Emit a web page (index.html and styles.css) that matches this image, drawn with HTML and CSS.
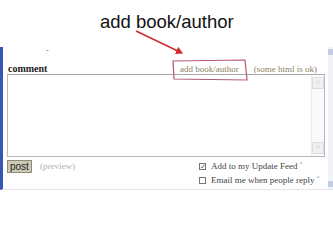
FILE: index.html
```html
<!DOCTYPE html>
<html>
<head>
<meta charset="utf-8">
<link rel="stylesheet" href="styles.css">
</head>
<body>
<div class="stage">
  <h1 class="title">add book/author</h1>
  <div class="shot">
    <div class="page">
      <div class="dash">-</div>
      <div class="head">
        <span class="label">comment</span>
        <span class="links"><span class="link">add book/author</span><span class="note">(some html is ok)</span></span>
      </div>
      <div class="textarea">
        <div class="tscroll">
          <span class="tbtn">&#708;</span>
          <span class="tbtn">&#709;</span>
        </div>
      </div>
      <div class="foot">
        <div class="actions">
          <span class="post">post</span>
          <span class="preview">(preview)</span>
        </div>
        <div class="opts">
          <div class="opt"><span class="box checked">&#10003;</span>Add to my Update Feed <sup>*</sup></div>
          <div class="opt"><span class="box"></span>Email me when people reply <sup>*</sup></div>
        </div>
      </div>
    </div>
    <div class="pscroll">
      <span class="parrow up"></span>
      <span class="parrow down"></span>
    </div>
  </div>
  <svg class="notes" width="333" height="250" viewBox="0 0 333 250">
    <defs>
      <marker id="ah" markerWidth="8" markerHeight="8" refX="6" refY="4" orient="auto" markerUnits="userSpaceOnUse">
        <path d="M0,0 L7,4 L0,8 Z" fill="#d42a2a"/>
      </marker>
    </defs>
    <line x1="136" y1="31" x2="182" y2="53" stroke="#d42a2a" stroke-width="1.5" marker-end="url(#ah)"/>
    <path d="M173,61 L245,60 L247,80 L174,79 Z" fill="none" stroke="#b25a6c" stroke-width="1.2"/>
  </svg>
</div>
</body>
</html>
```
FILE: styles.css
```css
* { box-sizing: border-box; }
html, body { margin: 0; padding: 0; background: #fff; }
.stage { position: relative; width: 333px; height: 250px; overflow: hidden; }
.title {
  margin: 0;
  padding: 11px 0 0 100px;
  height: 47px;
  font: normal 18.5px/22px "Liberation Sans", Arial, sans-serif;
  color: #111;
}
.shot {
  display: flex;
  height: 143px;
  border-left: 3px solid #3a55b8;
  border-bottom: 1px solid #e4e6ec;
}
.page {
  flex: 1;
  padding: 0 3px 0 4px;
  font-family: "Liberation Serif", "Times New Roman", serif;
}
.dash { height: 16px; font-size: 8px; line-height: 8px; padding-left: 39px; color: #666; }
.head {
  display: flex;
  justify-content: space-between;
  align-items: flex-end;
  height: 11px;
  padding-right: 8px;
}
.label { font-weight: bold; font-size: 10px; line-height: 10px; color: #222; padding-left: 1px; }
.links { display: flex; gap: 15px; font-size: 9px; line-height: 10px; color: #8a8160; }
.textarea {
  height: 83px;
  width: 318px;
  border: 1px solid #b9b9b9;
  border-top-color: #a8a8a8;
  display: flex;
  justify-content: flex-end;
}
.tscroll {
  width: 13px;
  border-left: 1px solid #ececec;
  background: #fafafa;
  display: flex;
  flex-direction: column;
  justify-content: space-between;
  padding: 2px 0;
}
.tbtn {
  height: 12px;
  background: #f0f0f0;
  border: 1px solid #dedede;
  color: #c4c4c4;
  font-size: 8px;
  line-height: 10px;
  text-align: center;
}
.foot { display: flex; justify-content: space-between; padding-top: 2px; }
.actions { display: flex; align-items: center; gap: 8px; height: 14px; }
.post {
  display: inline-block;
  height: 13px;
  padding: 0 2px;
  background: #cdc9b5;
  border: 1px solid #8f8b78;
  font: 10px/11px "Liberation Sans", Arial, sans-serif;
  color: #222;
}
.preview { font-size: 9px; color: #b5b1a6; }
.opts { padding-right: 5px; width: 126px; }
.opt {
  display: flex;
  align-items: center;
  height: 14px;
  font-size: 9px;
  color: #444;
  white-space: nowrap;
}
.opt sup { font-size: 6px; color: #999; margin-left: 2px; align-self: flex-start; margin-top: 2px; }
.box {
  width: 7px; height: 7px;
  border: 1px solid #777;
  margin-right: 5px;
  font-size: 7px; line-height: 6px;
  text-align: center;
  color: #3a6a3a;
  background: #fff;
}
.pscroll {
  width: 5px;
  background: #f2f3f6;
  display: flex;
  flex-direction: column;
  justify-content: space-between;
  padding: 2px 0;
}
.parrow { display: block; height: 6px; background: #c4cde4; }
.notes { position: absolute; left: 0; top: 0; pointer-events: none; }
```
